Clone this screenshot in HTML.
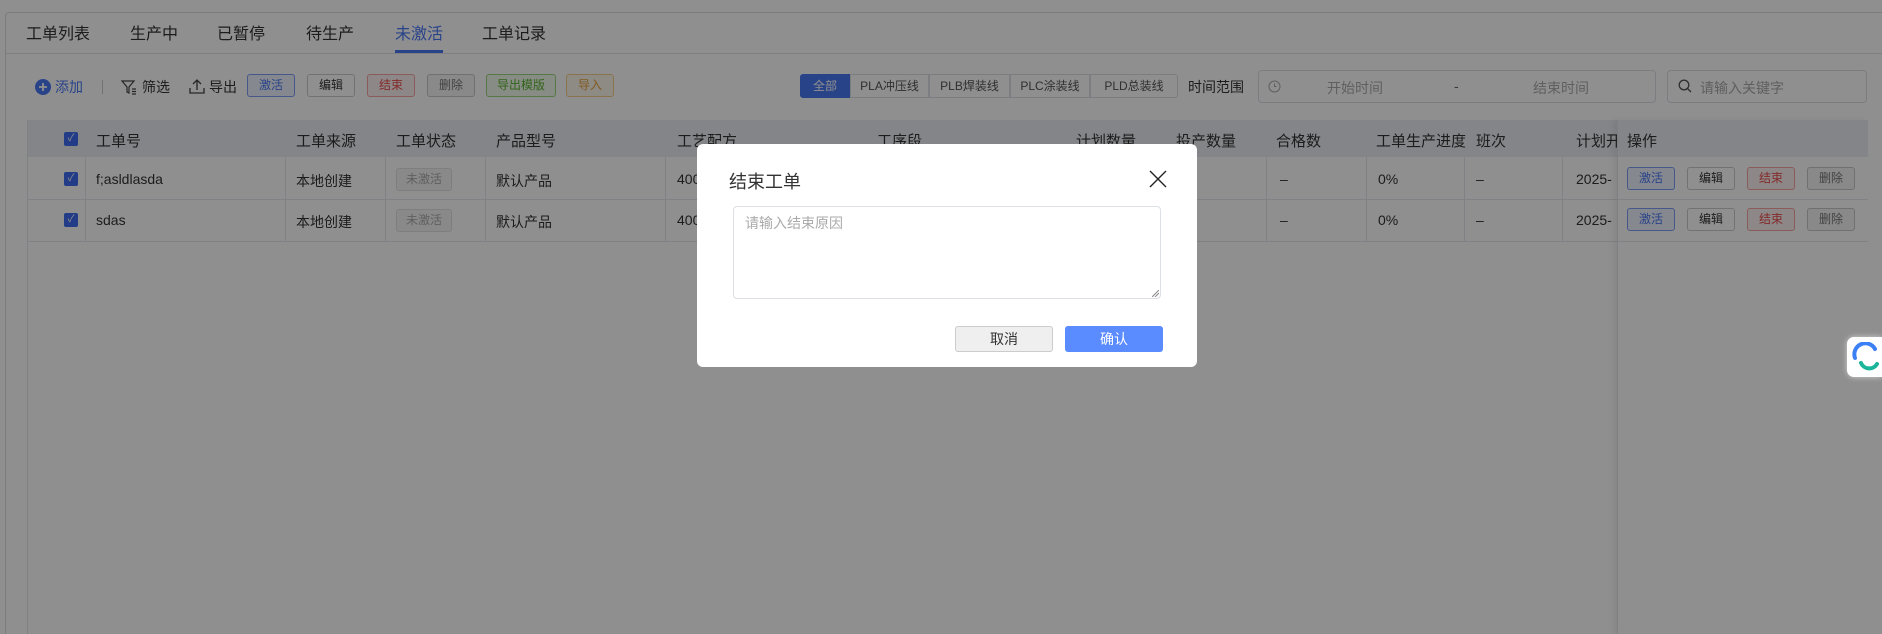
<!DOCTYPE html>
<html style="overflow:hidden;width:1882px;height:634px"><head><meta charset="utf-8"><style>
*{box-sizing:border-box;margin:0;padding:0}
body{width:1882px;height:634px;overflow:hidden;background:#fff;font-family:"Liberation Sans","Noto Sans CJK SC",sans-serif;color:#333;position:relative}
.a{position:absolute;white-space:nowrap}
.card{position:absolute;left:5px;top:12px;width:1877px;height:622px;border:1px solid #ddd;border-right:none;border-bottom:none;border-radius:4px 0 0 0;background:#fff}
.tab{position:absolute;top:20px;font-size:16px;color:#333}
.btn{position:absolute;top:74px;height:23px;border:1px solid;border-radius:3px;font-size:12px;text-align:center;line-height:21px}
.seg{position:absolute;top:74px;height:24px;border:1px solid #dcdfe6;font-size:12px;line-height:22px;text-align:center;color:#555}
.th{position:absolute;top:130px;font-size:15px;color:#333}
.td{position:absolute;font-size:14px;color:#333}
.vl{position:absolute;width:1px;background:#e4e6eb}
.hl{position:absolute;height:1px;background:#e4e6eb}
.cb{position:absolute;width:14px;height:14px;background:#3d6cf0;border-radius:2px;color:#fff;font-size:10px;line-height:14px;text-align:center}
.ob{position:absolute;width:48px;height:23px;border:1px solid;border-radius:3px;font-size:12px;line-height:21px;text-align:center;background:#fff}
</style></head><body>
<div class="card"></div>
<div class="tab" style="left:26px">工单列表</div>
<div class="tab" style="left:130px">生产中</div>
<div class="tab" style="left:217px">已暂停</div>
<div class="tab" style="left:306px">待生产</div>
<div class="tab" style="left:395px;color:#4a78f5">未激活</div>
<div class="tab" style="left:482px">工单记录</div>
<div class="a" style="left:395px;top:50px;width:48px;height:3px;background:#4a78f5"></div>
<div class="hl" style="left:6px;top:53px;width:1876px;background:#e2e2e2"></div>

<svg class="a" style="left:35px;top:79px" width="16" height="16"><circle cx="8" cy="8" r="8" fill="#4a78f5"/><path d="M8 4v8M4 8h8" stroke="#fff" stroke-width="1.8"/></svg>
<div class="a" style="left:55px;top:77px;font-size:14px;color:#4a78f5">添加</div>
<div class="a" style="left:102px;top:80px;width:1px;height:14px;background:#ccc"></div>
<svg class="a" style="left:120px;top:78px" width="18" height="18" fill="none" stroke="#444" stroke-width="1.2"><path d="M2 3h12l-5 6v6l-2-1V9z"/><path d="M12 11h4M12 13.5h4M12 16h4"/></svg>
<div class="a" style="left:142px;top:77px;font-size:14px">筛选</div>
<svg class="a" style="left:188px;top:77px" width="18" height="18" fill="none" stroke="#444" stroke-width="1.3"><path d="M9 13V3M5 7l4-4 4 4M2 11v5h14v-5"/></svg>
<div class="a" style="left:209px;top:77px;font-size:14px">导出</div>
<div class="btn" style="left:247px;width:48px;border-color:#7d9cf5;color:#4a78f5;background:#eef2fe">激活</div>
<div class="btn" style="left:307px;width:48px;border-color:#ccc;color:#333">编辑</div>
<div class="btn" style="left:367px;width:48px;border-color:#f5a3a3;color:#e84c4c;background:#fef0f0">结束</div>
<div class="btn" style="left:427px;width:48px;border-color:#c4c8cc;color:#777;background:#f4f5f6">删除</div>
<div class="btn" style="left:486px;width:70px;border-color:#9ad47e;color:#5bb52f;background:#f0f9eb">导出模版</div>
<div class="btn" style="left:566px;width:48px;border-color:#f5cf8c;color:#e6a23c;background:#fdf6ec">导入</div>

<div class="seg" style="left:800px;width:50px;background:#4a78f5;color:#fff;border-color:#4a78f5;border-radius:3px 0 0 3px">全部</div>
<div class="seg" style="left:850px;width:79px">PLA冲压线</div>
<div class="seg" style="left:929px;width:81px">PLB焊装线</div>
<div class="seg" style="left:1010px;width:80px">PLC涂装线</div>
<div class="seg" style="left:1090px;width:88px;border-radius:0 3px 3px 0">PLD总装线</div>
<div class="a" style="left:1188px;top:77px;font-size:14px">时间范围</div>
<div class="a" style="left:1258px;top:70px;width:398px;height:33px;border:1px solid #dcdfe6;border-radius:4px"></div>
<svg class="a" style="left:1268px;top:80px" width="13" height="13" fill="none" stroke="#aaa"><circle cx="6.5" cy="6.5" r="5.5"/><path d="M6.5 3.5v3h2"/></svg>
<div class="a" style="left:1327px;top:78px;font-size:14px;color:#aaa">开始时间</div>
<div class="a" style="left:1454px;top:78px;font-size:14px;color:#666">-</div>
<div class="a" style="left:1533px;top:78px;font-size:14px;color:#aaa">结束时间</div>
<div class="a" style="left:1667px;top:70px;width:200px;height:33px;border:1px solid #dcdfe6;border-radius:4px"></div>
<svg class="a" style="left:1678px;top:79px" width="14" height="14" fill="none" stroke="#555" stroke-width="1.3"><circle cx="6" cy="6" r="4.8"/><path d="M9.5 9.5l3.5 3.5"/></svg>
<div class="a" style="left:1700px;top:78px;font-size:14px;color:#aaa">请输入关键字</div>

<div class="a" style="left:27px;top:120px;width:1841px;height:37px;background:#eaedf3"></div>
<div class="vl" style="left:27px;top:120px;height:514px"></div>
<div class="vl" style="left:1867px;top:120px;height:514px"></div>
<div class="cb" style="left:64px;top:132px">✓</div>
<div class="th" style="left:96px">工单号</div>
<div class="th" style="left:296px">工单来源</div>
<div class="th" style="left:396px">工单状态</div>
<div class="th" style="left:496px">产品型号</div>
<div class="th" style="left:677px">工艺配方</div>
<div class="th" style="left:877px">工序段</div>
<div class="th" style="left:1076px">计划数量</div>
<div class="th" style="left:1176px">投产数量</div>
<div class="th" style="left:1276px">合格数</div>
<div class="th" style="left:1376px">工单生产进度</div>
<div class="th" style="left:1476px">班次</div>
<div class="th" style="left:1576px">计划开</div>
<div class="hl" style="left:27px;top:199px;width:1841px"></div>
<div class="hl" style="left:27px;top:241px;width:1841px"></div>
<div class="vl" style="left:85px;top:157px;height:84px"></div>
<div class="vl" style="left:285px;top:157px;height:84px"></div>
<div class="vl" style="left:385px;top:157px;height:84px"></div>
<div class="vl" style="left:485px;top:157px;height:84px"></div>
<div class="vl" style="left:665px;top:157px;height:84px"></div>
<div class="vl" style="left:1266px;top:157px;height:84px"></div>
<div class="vl" style="left:1366px;top:157px;height:84px"></div>
<div class="vl" style="left:1464px;top:157px;height:84px"></div>
<div class="vl" style="left:1562px;top:157px;height:84px"></div>
<div class="a" style="left:1617px;top:120px;width:251px;height:514px;background:#fff;border-left:1px solid #e0e2e6;box-shadow:-4px 0 6px rgba(0,0,0,.06)"></div>
<div class="a" style="left:1618px;top:120px;width:250px;height:37px;background:#eaedf3"></div>
<div class="hl" style="left:1618px;top:199px;width:250px"></div>
<div class="hl" style="left:1618px;top:241px;width:250px"></div>
<div class="th" style="left:1627px">操作</div>

<div class="cb" style="left:64px;top:172px">✓</div>
<div class="td" style="left:96px;top:171px">f;asldlasda</div>
<div class="td" style="left:296px;top:171px">本地创建</div>
<div class="a" style="left:396px;top:168px;width:56px;height:23px;border:1px solid #e0e0e0;border-radius:3px;background:#f5f5f5;color:#aaa;font-size:12px;line-height:21px;text-align:center">未激活</div>
<div class="td" style="left:496px;top:171px">默认产品</div>
<div class="td" style="left:677px;top:171px">400</div>
<div class="td" style="left:1280px;top:171px">–</div>
<div class="td" style="left:1378px;top:171px">0%</div>
<div class="td" style="left:1476px;top:171px">–</div>
<div class="td" style="left:1576px;top:171px">2025-</div>
<div class="cb" style="left:64px;top:213px">✓</div>
<div class="td" style="left:96px;top:212px">sdas</div>
<div class="td" style="left:296px;top:212px">本地创建</div>
<div class="a" style="left:396px;top:209px;width:56px;height:23px;border:1px solid #e0e0e0;border-radius:3px;background:#f5f5f5;color:#aaa;font-size:12px;line-height:21px;text-align:center">未激活</div>
<div class="td" style="left:496px;top:212px">默认产品</div>
<div class="td" style="left:677px;top:212px">400</div>
<div class="td" style="left:1280px;top:212px">–</div>
<div class="td" style="left:1378px;top:212px">0%</div>
<div class="td" style="left:1476px;top:212px">–</div>
<div class="td" style="left:1576px;top:212px">2025-</div>

<div class="ob" style="left:1627px;top:167px;border-color:#7d9cf5;color:#4a78f5;background:#eef2fe">激活</div>
<div class="ob" style="left:1687px;top:167px;border-color:#ccc;color:#333">编辑</div>
<div class="ob" style="left:1747px;top:167px;border-color:#f5a3a3;color:#e84c4c;background:#fef0f0">结束</div>
<div class="ob" style="left:1807px;top:167px;border-color:#c4c8cc;color:#777;background:#f4f5f6">删除</div>
<div class="ob" style="left:1627px;top:208px;border-color:#7d9cf5;color:#4a78f5;background:#eef2fe">激活</div>
<div class="ob" style="left:1687px;top:208px;border-color:#ccc;color:#333">编辑</div>
<div class="ob" style="left:1747px;top:208px;border-color:#f5a3a3;color:#e84c4c;background:#fef0f0">结束</div>
<div class="ob" style="left:1807px;top:208px;border-color:#c4c8cc;color:#777;background:#f4f5f6">删除</div>

<div class="a" style="left:0;top:0;width:1882px;height:634px;background:rgba(0,0,0,0.44)"></div>

<div class="a" style="left:1847px;top:337px;width:35px;height:40px;background:#fff;border-radius:7px 0 0 7px;box-shadow:0 0 6px rgba(255,255,255,.6)"></div>
<svg class="a" style="left:1851px;top:342px" width="31" height="30" fill="none" stroke-width="4" stroke-linecap="round"><path d="M4 16A11 11 0 0 1 24 7" stroke="#3d7ff5"/><path d="M10 21A9 9 0 0 0 26 22" stroke="#1cb59a"/></svg>

<div class="a" style="left:697px;top:144px;width:500px;height:223px;background:#fff;border-radius:6px"></div>
<div class="a" style="left:729px;top:168px;font-size:18px;color:#333">结束工单</div>
<svg class="a" style="left:1149px;top:170px" width="18" height="18" stroke="#222" stroke-width="1.4"><path d="M1 1l16 16M17 1L1 17"/></svg>
<div class="a" style="left:733px;top:206px;width:428px;height:93px;border:1px solid #dcdfe6;border-radius:4px"></div>
<div class="a" style="left:745px;top:213px;font-size:14px;color:#aaa">请输入结束原因</div>
<svg class="a" style="left:1152px;top:290px" width="7" height="7" stroke="#888"><path d="M0 7L7 0M3 7l4-4"/></svg>
<div class="a" style="left:955px;top:326px;width:98px;height:26px;border:1px solid #ccc;border-radius:3px;background:#efefef;font-size:14px;line-height:24px;text-align:center;color:#333">取消</div>
<div class="a" style="left:1065px;top:326px;width:98px;height:26px;border-radius:3px;background:#5b8cff;font-size:14px;line-height:26px;text-align:center;color:#fff">确认</div>
</body></html>
